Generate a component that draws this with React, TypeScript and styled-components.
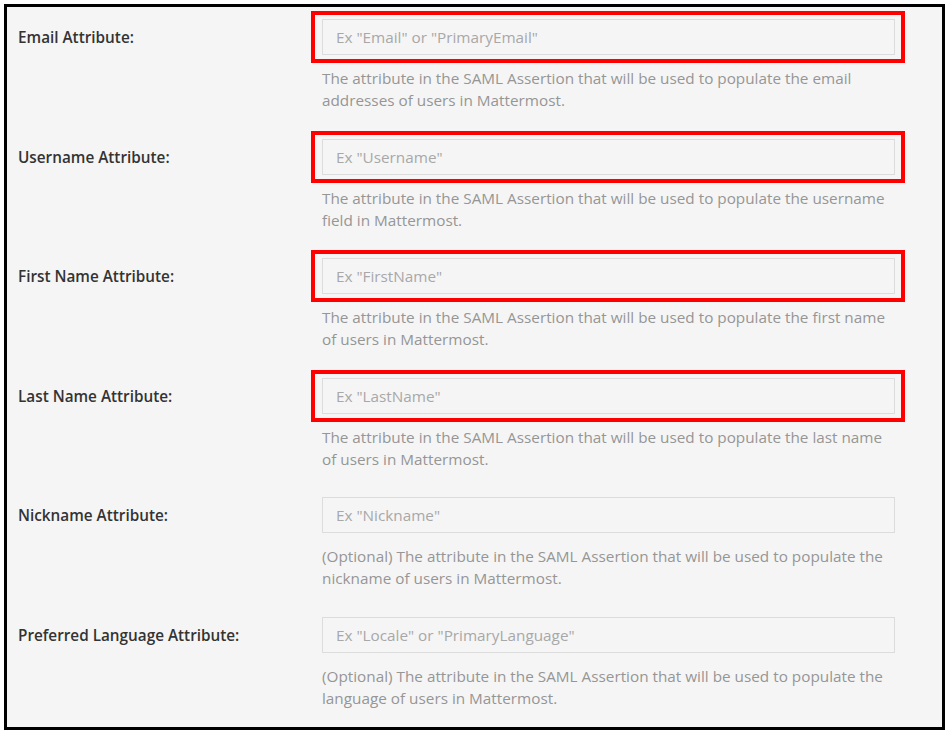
import React from "react";
import styled, { createGlobalStyle } from "styled-components";

const GlobalStyle = createGlobalStyle`
  html, body {
    margin: 0;
    padding: 0;
    background: #ffffff;
  }
  body {
    font-family: "Open Sans", "Noto Sans", Arial, sans-serif;
  }
`;

const Frame = styled.div`
  box-sizing: border-box;
  margin: 4px 0 0 4px;
  width: 941px;
  height: 726px;
  border: 3px solid #000;
  background: #f5f5f5;
  padding: 12px 0 0 11px;
  display: flex;
  flex-direction: column;
  gap: 27.6px;
  overflow: hidden;
`;

const Row = styled.div`
  display: grid;
  grid-template-columns: 304px 573px;
  align-items: start;
`;

const Label = styled.label`
  font-size: 15.3px;
  font-weight: 600;
  color: #333333;
  line-height: 36px;
  height: 36px;
`;

const Field = styled.div`
  display: flex;
  flex-direction: column;
`;

const Highlight = styled.div<{ $on: boolean }>`
  ${({ $on }) =>
    $on
      ? `
    border: 4px solid #ff0000;
    padding: 4px 6px 4px 7px;
    margin: -8px -10px -8px -11px;
  `
      : ``}
`;

const Input = styled.input`
  box-sizing: border-box;
  display: block;
  width: 573px;
  height: 36px;
  border: 1px solid #dcdcdc;
  background: #f5f5f5;
  padding: 0 13px;
  font-family: "Open Sans", "Noto Sans", Arial, sans-serif;
  font-size: 15.3px;
  color: #555;
  outline: none;
  border-radius: 0;
  &::placeholder {
    color: #a8a8a8;
  }
`;

const Help = styled.div`
  margin-top: 12px;
  font-size: 15.3px;
  line-height: 22px;
  color: #969696;
  width: 573px;
`;

type Item = {
  label: string;
  placeholder: string;
  help: string;
  highlight: boolean;
};

const items: Item[] = [
  {
    label: "Email Attribute:",
    placeholder: 'Ex "Email" or "PrimaryEmail"',
    help:
      "The attribute in the SAML Assertion that will be used to populate the email addresses of users in Mattermost.",
    highlight: true,
  },
  {
    label: "Username Attribute:",
    placeholder: 'Ex "Username"',
    help:
      "The attribute in the SAML Assertion that will be used to populate the username field in Mattermost.",
    highlight: true,
  },
  {
    label: "First Name Attribute:",
    placeholder: 'Ex "FirstName"',
    help:
      "The attribute in the SAML Assertion that will be used to populate the first name of users in Mattermost.",
    highlight: true,
  },
  {
    label: "Last Name Attribute:",
    placeholder: 'Ex "LastName"',
    help:
      "The attribute in the SAML Assertion that will be used to populate the last name of users in Mattermost.",
    highlight: true,
  },
  {
    label: "Nickname Attribute:",
    placeholder: 'Ex "Nickname"',
    help:
      "(Optional) The attribute in the SAML Assertion that will be used to populate the nickname of users in Mattermost.",
    highlight: false,
  },
  {
    label: "Preferred Language Attribute:",
    placeholder: 'Ex "Locale" or "PrimaryLanguage"',
    help:
      "(Optional) The attribute in the SAML Assertion that will be used to populate the language of users in Mattermost.",
    highlight: false,
  },
];

export default function App() {
  return (
    <>
      <GlobalStyle />
      <Frame>
        {items.map((it) => (
          <Row key={it.label}>
            <Label>{it.label}</Label>
            <Field>
              <Highlight $on={it.highlight}>
                <Input type="text" placeholder={it.placeholder} />
              </Highlight>
              <Help>{it.help}</Help>
            </Field>
          </Row>
        ))}
      </Frame>
    </>
  );
}
